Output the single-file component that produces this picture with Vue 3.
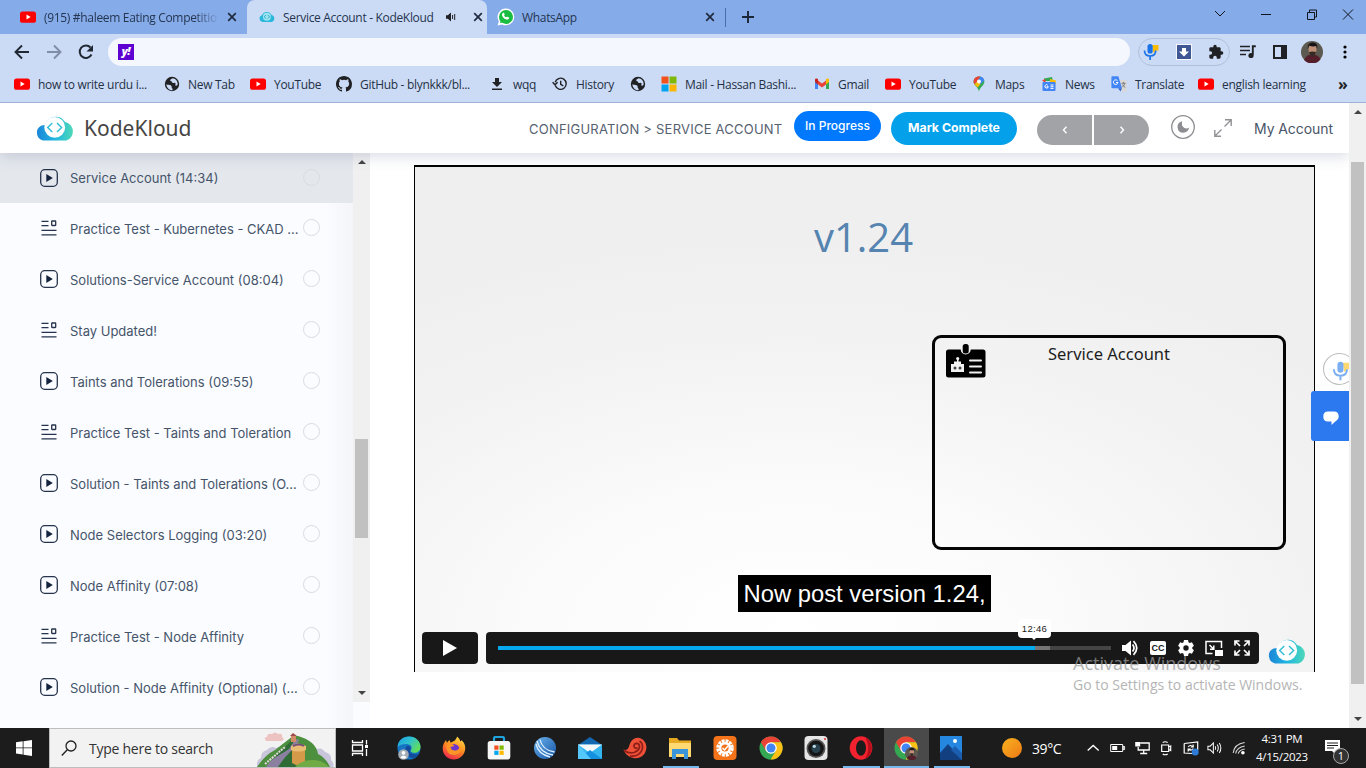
<script setup>
const bookmarks = [
  { icon: 'yt', label: 'how to write urdu i...' },
  { icon: 'globe', label: 'New Tab' },
  { icon: 'yt', label: 'YouTube' },
  { icon: 'github', label: 'GitHub - blynkkk/bl...' },
  { icon: 'download', label: 'wqq' },
  { icon: 'history', label: 'History' },
  { icon: 'globe', label: '' },
  { icon: 'microsoft', label: 'Mail - Hassan Bashi...' },
  { icon: 'gmail', label: 'Gmail' },
  { icon: 'yt', label: 'YouTube' },
  { icon: 'maps', label: 'Maps' },
  { icon: 'news', label: 'News' },
  { icon: 'translate', label: 'Translate' },
  { icon: 'yt', label: 'english learning' },
]

const lessons = [
  { icon: 'lesson-video', title: 'Service Account (14:34)', active: true },
  { icon: 'lesson-text', title: 'Practice Test - Kubernetes - CKAD ...' },
  { icon: 'lesson-video', title: 'Solutions-Service Account (08:04)' },
  { icon: 'lesson-text', title: 'Stay Updated!' },
  { icon: 'lesson-video', title: 'Taints and Tolerations (09:55)' },
  { icon: 'lesson-text', title: 'Practice Test - Taints and Toleration' },
  { icon: 'lesson-video', title: 'Solution - Taints and Tolerations (O...' },
  { icon: 'lesson-video', title: 'Node Selectors Logging (03:20)' },
  { icon: 'lesson-video', title: 'Node Affinity (07:08)' },
  { icon: 'lesson-text', title: 'Practice Test - Node Affinity' },
  { icon: 'lesson-video', title: 'Solution - Node Affinity (Optional) (...' },
]

const apps = [
  { icon: 'edge' },
  { icon: 'firefox' },
  { icon: 'store' },
  { icon: 'swirl' },
  { icon: 'mail' },
  { icon: 'nautilus' },
  { icon: 'explorer', open: true },
  { icon: 'sunbox' },
  { icon: 'chrome' },
  { icon: 'camera' },
  { icon: 'opera', open: true },
  { icon: 'chrome-user', open: true, active: true },
  { icon: 'photos', open: true },
]

const trayIcons = ['tray-up', 'tray-battery', 'tray-net', 'tray-cam', 'tray-sync', 'tray-sound', 'tray-wifi']
const played = 87.6
const loaded = 90
</script>

<template>
  <div class="screen">
    <svg class="sprite" width="0" height="0">
      <defs>
        <linearGradient id="gCloud" x1="0" y1="0" x2="1" y2="0">
          <stop offset="0" stop-color="#1c86d8" /><stop offset=".5" stop-color="#1fb5e0" /><stop offset="1" stop-color="#4fd8b8" />
        </linearGradient>
        <linearGradient id="gEdge" x1="0" y1="0" x2="1" y2=".6">
          <stop offset="0" stop-color="#1b9de2" /><stop offset=".5" stop-color="#2fc0cf" /><stop offset="1" stop-color="#62dd5b" />
        </linearGradient>
        <linearGradient id="gFox" x1=".8" y1="0" x2=".3" y2="1">
          <stop offset="0" stop-color="#ffe04a" /><stop offset=".5" stop-color="#ff8a1e" /><stop offset="1" stop-color="#f0264f" />
        </linearGradient>
        <linearGradient id="gSun" x1="0" y1="0" x2="1" y2="1">
          <stop offset="0" stop-color="#f8b21f" /><stop offset="1" stop-color="#ef7a16" />
        </linearGradient>
        <linearGradient id="gSwirl" x1="0" y1="0" x2="1" y2="1">
          <stop offset="0" stop-color="#6cb4ee" /><stop offset="1" stop-color="#1453a4" />
        </linearGradient>
      </defs>

      <symbol id="yt" viewBox="0 0 16 16">
        <rect x="0" y="2.4" width="16" height="11.4" rx="2.6" fill="#f00" />
        <path d="M6.5 5.6v5l4.2-2.5z" fill="#fff" />
      </symbol>
      <symbol id="globe" viewBox="0 0 16 16">
        <circle cx="8" cy="8" r="7.2" fill="#202124" />
        <path d="M2.4 8.2c1.5.9 2.9.4 4.3 1.1 1.7.8.4 2.3 1.4 3 .8.6.6 1.5.3 1.9-3.2.1-6-2.6-6-6zM8.5 2.3c-.9.8-2.5 1-2.3 2.2.2 1 1.6.5 1.8 1.6.2 1 1.4 1.2 2.3.8 1.1-.4 1.6.8 1.1 1.7-.4.8.4 1.7 1.3 1 .6-.5.9-1.1 1-1.7-.1-3-2.4-5.3-5.2-5.6z" fill="#ccdbf5" />
      </symbol>
      <symbol id="github" viewBox="0 0 16 16">
        <path fill="#202124" d="M8 0C3.58 0 0 3.58 0 8c0 3.54 2.29 6.53 5.47 7.59.4.07.55-.17.55-.38 0-.19-.01-.82-.01-1.49-2.01.37-2.53-.49-2.69-.94-.09-.23-.48-.94-.82-1.13-.28-.15-.68-.52-.01-.53.63-.01 1.08.58 1.23.82.72 1.21 1.87.87 2.33.66.07-.52.28-.87.51-1.07-1.78-.2-3.64-.89-3.64-3.95 0-.87.31-1.59.82-2.15-.08-.2-.36-1.02.08-2.12 0 0 .67-.21 2.2.82a7.6 7.6 0 0 1 4 0c1.53-1.04 2.2-.82 2.2-.82.44 1.1.16 1.92.08 2.12.51.56.82 1.27.82 2.15 0 3.07-1.87 3.75-3.65 3.95.29.25.54.73.54 1.48 0 1.07-.01 1.93-.01 2.2 0 .21.15.46.55.38A8.01 8.01 0 0 0 16 8c0-4.42-3.58-8-8-8z" />
      </symbol>
      <symbol id="download" viewBox="0 0 16 16">
        <path d="M6 2h4v4h3l-5 5-5-5h3zM3 12.4h10V14H3z" fill="#202124" />
      </symbol>
      <symbol id="history" viewBox="0 0 16 16">
        <path d="M3.3 9.6A5.6 5.6 0 1 0 3.2 6.3M.6 6.2l2.4 2.6 2.6-2.6M8.7 4.7v3.7l2.6 1.5" fill="none" stroke="#202124" stroke-width="1.4" />
      </symbol>
      <symbol id="microsoft" viewBox="0 0 16 16">
        <path d="M.5.5h7v7h-7z" fill="#f1511b" /><path d="M8.5.5h7v7h-7z" fill="#80b80a" />
        <path d="M.5 8.5h7v7h-7z" fill="#00a3ee" /><path d="M8.5 8.5h7v7h-7z" fill="#fbb507" />
      </symbol>
      <symbol id="gmail" viewBox="0 0 16 16">
        <path d="M1 4v9h3V6z" fill="#4285f4" /><path d="M12 6v7h3V4z" fill="#34a853" />
        <path d="M4 8.4V4.6l4 3 4-3v3.8l-4 3z" fill="#ea4335" />
        <path d="M1 4c0-1.6 1.8-1.9 3-.9v5.3L1 6z" fill="#c5221f" /><path d="M15 4c0-1.6-1.8-1.9-3-.9v5.3L15 6z" fill="#fbbc04" />
      </symbol>
      <symbol id="maps" viewBox="0 0 16 16">
        <path d="M8 .4c3 0 5.4 2.300 5.400 5.200C13.400 9.700 9 10.800 8 15.600 7 10.800 2.600 9.700 2.600 5.600 2.600 2.700 5 .4 8 .4z" fill="#34a853" />
        <path d="M2.700 6.500C2 3 4.500.4 8 .4l1.500.2L4 8.600z" fill="#ea4335" /><path d="M9.500.6c2 .500 3.400 1.900 3.800 3.800L7 10.500 4.500 8z" fill="#4285f4" />
        <path d="M3.500 8.600 6.500 5l3 3-2.800 3.500z" fill="#fbbc04" /><circle cx="8" cy="5.600" r="2" fill="#fff" />
      </symbol>
      <symbol id="news" viewBox="0 0 16 16">
        <path d="M3 2.500 11 1l1 4H3z" fill="#34a853" /><path d="M1 4.500 4 3l1 4z" fill="#ea4335" /><path d="m9 3 6 1.500-.6 4H9z" fill="#fbbc04" />
        <rect x="1.500" y="6" width="13" height="9" rx="1" fill="#4285f4" />
        <path d="M6.800 9.200a1.700 1.700 0 1 0 .5 1.500H5.500M9.500 9h3M9.500 10.700h3M9.500 12.400h3" fill="none" stroke="#fff" stroke-width="1" />
      </symbol>
      <symbol id="translate" viewBox="0 0 16 16">
        <path d="M7 4h7.500q1.100 0 1.100 1.200V15q0 .8-1 .8H10z" fill="#d8d8d8" />
        <path d="M.4 1.200Q.4.200 1.400.200h6L11 12.300H1.400q-1 0-1-1z" fill="#4285f4" /><path d="m7 12.300h4L9.500 15.500z" fill="#3367d6" />
        <path d="M6.500 4.700A2.300 2.300 0 1 0 7 6.500H5" fill="none" stroke="#fff" stroke-width="1" /><path d="M10.500 7.300h4M12.500 6v1.300M13.800 7.300q-.7 2.500-2.600 4M11.500 8.500q1 2 2.800 3" fill="none" stroke="#777" stroke-width=".9" />
      </symbol>
      <symbol id="cloud" viewBox="0 0 40 26">
        <path d="M8 25.500A8 8 0 0 1 6.500 10.500Q8 10 10 10.300A11 11 0 0 1 30 7 9.600 9.600 0 0 1 31.500 25.500z" fill="url(#gCloud)" />
        <circle cx="19.700" cy="12.400" r="10.400" fill="#fff" />
        <path d="m17.300 8-4.600 4.500 4.600 4.500M22 8l4.600 4.500L22 17" fill="none" stroke="#35bfd4" stroke-width="1.500" />
      </symbol>
      <symbol id="minicloud" viewBox="0 0 16 12">
        <path d="M3.500 11A3.500 3.500 0 0 1 3 4.200 5.200 5.200 0 0 1 12.600 4 3.600 3.600 0 0 1 12.500 11z" fill="#29b7dc" />
        <circle cx="7.900" cy="5.800" r="4" fill="#9be4ef" /><path d="M7 4 5.200 5.800 7 7.600M8.800 4l1.800 1.800-1.800 1.800" fill="none" stroke="#2badcf" />
      </symbol>
      <symbol id="close" viewBox="0 0 10 10"><path d="m1.200 1.200 7.600 7.600m0-7.600L1.200 8.800" stroke="#202b3e" stroke-width="1.700" /></symbol>
      <symbol id="sound" viewBox="0 0 12 12"><path d="M1 4.300h1.800L6 1.500v9L2.800 7.700H1z" fill="#202124" /><path d="M7.600 4v4M9.700 3v6" stroke="#202124" stroke-width="1" /></symbol>
      <symbol id="whatsapp" viewBox="0 0 18 18">
        <path d="M9 .5a8.400 8.400 0 1 1-4 15.900L.6 17.500l1.200-4.300A8.400 8.400 0 0 1 9 .5z" fill="#fff" /><circle cx="9" cy="8.900" r="7" fill="#19bd42" /><path d="m3 15 .800-3.500 3 2.800z" fill="#19bd42" />
        <path d="M6.200 4.800c1-.5 1.500 1.500 1.400 2-.6.800-.4 1 .2 1.700.8.900 1.300 1 2 .3.800-.4 2.400.7 2.300 1.100-.3 1.500-1.900 2-3.500 1.300C6.500 10.300 5 8.500 4.900 6.700q.2-1.400 1.300-1.900z" fill="#fff" />
      </symbol>
      <symbol id="mic" viewBox="0 0 18 18">
        <path d="M10 2h6.500v5.500H14L11.500 10z" fill="#fbbc04" /><rect x="5.500" y="1" width="5.200" height="9.500" rx="2.600" fill="#1a73e8" />
        <path d="M2.500 7.500q0 5.500 5.600 5.500t5.600-5.500M8.100 13v4" fill="none" stroke="#1a73e8" stroke-width="1.700" />
      </symbol>
      <symbol id="puzzle" viewBox="0 0 24 24">
        <path fill="#202124" d="M20.500 11H19V7c0-1.100-.9-2-2-2h-4V3.500a2.500 2.500 0 0 0-5 0V5H4c-1.100 0-2 .9-2 2v3.800h1.500a2.700 2.700 0 0 1 0 5.400H2V20c0 1.100.9 2 2 2h3.800v-1.500a2.700 2.700 0 0 1 5.400 0V22H17c1.100 0 2-.9 2-2v-4h1.500a2.500 2.500 0 0 0 0-5z" />
      </symbol>

      <symbol id="lesson-video" viewBox="0 0 18 18">
        <rect x=".7" y=".7" width="16.600" height="16.600" rx="4" fill="none" stroke="#25334c" stroke-width="1.300" /><path d="M6.300 5v8l6.500-4z" fill="#14233e" />
      </symbol>
      <symbol id="lesson-text" viewBox="0 0 18 18">
        <path d="M1.500 2.300h7M1.500 6.700h7M1.500 11.300h15M1.500 15.900h15" stroke="#25334c" stroke-width="1.300" /><rect x="11.700" y="2" width="4" height="4.500" rx=".5" fill="none" stroke="#25334c" stroke-width="1.300" />
      </symbol>

      <symbol id="edge" viewBox="0 0 24 24">
        <circle cx="12" cy="12" r="11.500" fill="#1674c2" />
        <path d="M.6 11C1 4.500 6 .5 12 .5c7 0 11.500 5 11.500 10.200 0 4-3 6-6.300 6-3 0-4-1.500-3.200-2.700 2-3.200-.5-6-4.500-6-4 0-7.500 1.200-8.900 3z" fill="url(#gEdge)" />
        <path d="M10 10c-4 4-1 11 5 12 4 0 7-2.500 7.500-5-3 2-8 1.500-9.500-1-.8-1.500 1-2 .7-4-.4-1.700-2-2.500-3.700-2z" fill="#124b9b" />
        <circle cx="6.500" cy="18.500" r="5.300" fill="#a5adb5" /><circle cx="6.500" cy="16.800" r="1.900" fill="#fff" /><path d="M3.300 21.500q3.200-4 6.400 0-3.200 2.600-6.400 0z" fill="#fff" />
      </symbol>
      <symbol id="firefox" viewBox="0 0 24 24">
        <path d="M15 .5c2 1.500 2.800 3 3.300 5l1.400-1.200C22.500 7 23.500 10 23.200 13c-.6 6-5.500 10.500-11.300 10.500S.6 19 .7 12.500c0-3 1.300-6 3.300-8.500l.8 2.800L7.500 4l1 2.500C11 6 14.500 4 15 .5z" fill="url(#gFox)" />
        <circle cx="11.800" cy="13.500" r="5.600" fill="#6d36cf" /><path d="M4.500 9q5-3 8 1l-4 1q1 4 5 3.500c3 0 5-3 3.500-6.500 4 5 1 11-5 11S4 14 4.500 9z" fill="#ff9526" />
      </symbol>
      <symbol id="store" viewBox="0 0 24 24">
        <path d="M7 7V2.500q0-1.500 1.500-1.500h7Q17 1 17 2.500V7" fill="none" stroke="#1fa4dd" stroke-width="2.200" /><rect x=".7" y="5" width="22.600" height="18.500" rx="2.500" fill="#f7f7f7" />
        <path d="M7.300 9.500h4.200v4.200H7.300z" fill="#f25022" /><path d="M12.500 9.500h4.200v4.200h-4.200z" fill="#7fba00" /><path d="M7.300 14.700h4.200v4.200H7.300z" fill="#00a4ef" /><path d="M12.500 14.700h4.200v4.200h-4.200z" fill="#ffb900" />
      </symbol>
      <symbol id="swirl" viewBox="0 0 24 24">
        <circle cx="12" cy="12" r="11" fill="url(#gSwirl)" /><path d="M4 5q3 12 16 14M7 3.500Q9 14 21.500 16M3 8q2 10 14 13" fill="none" stroke="#dcefff" stroke-width="1.300" />
      </symbol>
      <symbol id="mail" viewBox="0 0 24 24">
        <path d="M0 9 12 1l12 8z" fill="#1267b0" /><path d="M0 8.500h24V23H0z" fill="#35b5f0" /><path d="M0 8.500h24L12 17z" fill="#f3f7fa" /><path d="M0 23 12 14l12 9z" fill="#1490df" /><path d="M0 8.500 13 23H0z" fill="#54c8fa" />
      </symbol>
      <symbol id="nautilus" viewBox="0 0 24 24">
        <path d="M.5 13.500q4 1.500 5.500-3C8 3.500 12 1 16.500 2c5 1.500 8 6.500 6.500 12-1.500 6.500-7.500 9-12.500 8C5.500 21 2 18 .5 13.500z" fill="#ef5038" />
        <path d="M1 14.500q5 3.500 10 2 6-2 5.500-6.500c-1-4-6-3-5.500.500.500 2 2.500 2.300 3.500 1M7 20q9 1 12-6 2-6-2.500-9" fill="none" stroke="#8d1e17" stroke-width="1.700" />
      </symbol>
      <symbol id="explorer" viewBox="0 0 24 24">
        <path d="M1 2h8l2 2.500h12V20H1z" fill="#e8a922" /><path d="M1 7h22v14H1z" fill="#ffda73" /><path d="M4 13h16v10h-4v-5H8v5H4z" fill="#3a96da" />
      </symbol>
      <symbol id="sunbox" viewBox="0 0 24 24">
        <rect x=".5" y="0" width="23" height="24" rx="4" fill="#f57319" /><circle cx="12" cy="12" r="7" fill="none" stroke="#fff" stroke-width="3.500" stroke-dasharray="2.800 .9" /><circle cx="12" cy="12" r="6" fill="#fff" /><circle cx="12" cy="12" r="3.600" fill="#f57319" /><path d="m9.500 12 2 2 3.500-4" stroke="#fff" stroke-width="1.500" fill="none" />
      </symbol>
      <symbol id="chrome" viewBox="0 0 24 24">
        <circle cx="12" cy="12" r="11.500" fill="#34a853" /><path d="M2 6.200A11.500 11.500 0 0 1 22 6.200H12L7 15z" fill="#ea4335" /><path d="M22 6.200A11.500 11.500 0 0 1 11.500 23.500L17 14.800 12 6.200z" fill="#fbc116" />
        <circle cx="12" cy="12" r="5.800" fill="#fff" /><circle cx="12" cy="12" r="4.500" fill="#4285f4" />
      </symbol>
      <symbol id="camera" viewBox="0 0 24 24">
        <rect x=".5" y="0" width="23" height="24" rx="4" fill="#e6e6e6" /><circle cx="12" cy="12.500" r="9.500" fill="#555" /><circle cx="12" cy="12.500" r="7.800" fill="#151515" /><circle cx="12" cy="12.500" r="4.500" fill="#27414d" /><circle cx="10.300" cy="10.300" r="1.600" fill="#bfd9e6" /><circle cx="21" cy="3" r="1" fill="#e03030" />
      </symbol>
      <symbol id="opera" viewBox="0 0 24 24">
        <path fill-rule="evenodd" d="M12 .3a11.300 11.700 0 1 1 0 23.400A11.300 11.700 0 0 1 12 .3zm0 4a5 7.700 0 1 0 0 15.400 5 7.700 0 0 0 0-15.400z" fill="#f3222f" /><path d="M15 1c10 3 11 18 0 22 5-3 6-18 0-22z" fill="#b50f1b" />
      </symbol>
      <symbol id="face" viewBox="0 0 22 22">
        <circle cx="11" cy="11" r="11" fill="#5c5a50" /><path d="M3 19q3-6 8-5 6-1 8.500 4.500A11 11 0 0 1 3 19z" fill="#541f2b" />
        <path d="M7.500 8q.5-5 4-5t4 5q-.3 7-4 7t-4-7z" fill="#c08f78" /><path d="M6.700 8q-.5-6.500 5-6.500T16.200 8l-1-3q-4 1-7-.5z" fill="#171417" /><path d="M8 11q3.500-1 7 0-1 4.500-3.500 4.500T8 11z" fill="#352825" />
      </symbol>
      <symbol id="chrome-user" viewBox="0 0 24 24">
        <use href="#chrome" width="24" height="24" /><use href="#face" x="11" y="11" width="13" height="13" />
      </symbol>
      <symbol id="photos" viewBox="0 0 24 24">
        <path d="M1 0h22v24H1z" fill="#2587df" /><path d="M1 24V17L9 8l14 16z" fill="#123f7f" /><path d="m12 14 4-4 7 7v7z" fill="#1b5eb0" /><circle cx="16" cy="5" r="2" fill="#fff" />
      </symbol>

      <symbol id="tray-up" viewBox="0 0 16 16"><path d="m2.500 10.500 5.500-5 5.500 5" fill="none" stroke="#fff" stroke-width="1.400" /></symbol>
      <symbol id="tray-battery" viewBox="0 0 16 16"><path d="M1.500 4.500h12v7h-12zM14 6.500h1.500v3H14z" fill="none" stroke="#fff" /><path d="M3 6h5v4H3z" fill="#fff" /></symbol>
      <symbol id="tray-net" viewBox="0 0 16 16"><path d="M6 3h9v7H4V7M9.500 10v3.500M6 13.500h7" fill="none" stroke="#fff" stroke-width="1.300" /><path d="M1 2h5v4.500H1z" fill="#fff" /></symbol>
      <symbol id="tray-cam" viewBox="0 0 16 16"><path d="M3.500 5h7v6.500h-7zM10.500 7l2-1v4.500l-2-1M4.500 2.500q2.500-1.500 5 0M4.500 14q2.500 1.500 5 0" fill="none" stroke="#fff" stroke-width="1.200" /></symbol>
      <symbol id="tray-sync" viewBox="0 0 16 16"><path d="M1 3.500 14.500 2v8M1 3.500V13l8 .5M5 7q2-3 5 0M10 4.500V7H7.500M10 8.500q-2 3-5 .5M5 11.500V9h2.500" fill="none" stroke="#fff" stroke-width="1.200" /><circle cx="12" cy="12" r="3.500" fill="#2e7cd6" /></symbol>
      <symbol id="tray-sound" viewBox="0 0 18 16"><path d="M1 6h2.500L7 2.500v11L3.500 10H1z" fill="none" stroke="#fff" stroke-width="1.100" /><path d="M9 6q1.200 2 0 4M11.200 4.200q2.400 3.800 0 7.600M13.500 2.500q3.400 5.500 0 11" fill="none" stroke="#fff" stroke-width="1.100" /></symbol>
      <symbol id="tray-wifi" viewBox="0 0 16 16"><path d="M2 13Q3 4 13.500 2.500M4.500 13.500Q5.500 7.500 13.500 6M7 13.700Q8 10 13.500 9" fill="none" stroke="#d6d6d6" stroke-width="1.100" /><circle cx="11.700" cy="12.700" r="1.800" fill="#fff" /></symbol>
    </svg>

    <div class="tabs">
      <div class="tab t1"><svg class="i16"><use href="#yt" /></svg><span class="title fade">(915) #haleem Eating Competitio</span><svg class="x"><use href="#close" /></svg></div>
      <div class="tab t2"><svg class="i16 mc"><use href="#minicloud" /></svg><span class="title kk">Service Account - KodeKloud</span><svg class="snd"><use href="#sound" /></svg><svg class="x"><use href="#close" /></svg></div>
      <div class="tab t3"><svg class="wa"><use href="#whatsapp" /></svg><span class="title wt">WhatsApp</span><svg class="x"><use href="#close" /></svg></div>
      <svg class="plus" viewBox="0 0 14 14"><path d="M7 1v12M1 7h12" stroke="#1c2637" stroke-width="1.900" /></svg>
      <svg class="winctl" viewBox="0 0 160 28">
        <path d="m20 11 5 5 5-5M66 14.500h10M112.500 12.500h7v7h-7zM114.500 12v-2h7v7h-2M158 9.500l-10 10" fill="none" stroke="#10151f" /><path d="m148 9.500 10 10" stroke="#10151f" />
      </svg>
    </div>

    <div class="toolbar">
      <svg class="nav" viewBox="0 0 108 36">
        <path d="M29 18H16m6-6.500L15.500 18l6.500 6.500" fill="none" stroke="#202833" stroke-width="1.900" />
        <path d="M47 18h13m-6-6.500 6.500 6.500-6.500 6.500" fill="none" stroke="#7f8da8" stroke-width="1.900" />
        <path d="M91.500 20.500A6.200 6.200 0 1 1 90.500 13.500" fill="none" stroke="#202833" stroke-width="2" /><path d="M93 11v6.500h-6.500z" fill="#202833" />
      </svg>
      <div class="omnibox"><span class="yahoo">y!</span></div>
      <div class="exts">
        <svg class="e-mic"><use href="#mic" /></svg>
        <svg class="e-down" viewBox="0 0 16 16"><path d="M0 0h16v16H0z" fill="#f7f8fb" /><path d="M1 1h14v14H1z" fill="#3f5795" /><path d="M6 4h4v3.500h3l-5 5-5-5h3z" fill="#fff" /></svg>
        <svg class="i16"><use href="#puzzle" /></svg>
      </div>
      <svg class="queue" viewBox="0 0 18 16"><path d="M1 2.500h10M1 6.500h10M1 10.500h6" stroke="#202124" stroke-width="1.700" /><path d="M16.800 2.300h-3v8.500" stroke="#202124" stroke-width="1.900" fill="none" /><circle cx="12" cy="11.500" r="2.600" fill="#202124" /></svg>
      <svg class="panel" viewBox="0 0 14 14"><path d="M1 1h12v12H1z" fill="none" stroke="#202124" stroke-width="2" /><path d="M8 1h5v12H8z" fill="#202124" /></svg>
      <svg class="avatar"><use href="#face" /></svg>
      <svg class="dots" viewBox="0 0 4 14"><circle cx="2" cy="2" r="1.600" /><circle cx="2" cy="7" r="1.600" /><circle cx="2" cy="12" r="1.600" /></svg>
    </div>

    <div class="bookmarks">
      <div v-for="(b, i) in bookmarks" :key="i" class="bm"><svg class="i16"><use :href="'#' + b.icon" /></svg><span>{{ b.label }}</span></div>
      <b class="more">»</b>
    </div>

    <div class="page">
      <div class="site">
        <header class="head">
          <svg class="logo"><use href="#cloud" /></svg>
          <span class="brand">KodeKloud</span>
          <span class="crumb">CONFIGURATION &gt; SERVICE ACCOUNT</span>
          <span class="progress">In Progress</span>
          <span class="complete">Mark Complete</span>
          <div class="pager">
            <span><svg viewBox="0 0 6 8"><path d="M4.500.7 1.500 4l3 3.300" /></svg></span>
            <span><svg viewBox="0 0 6 8"><path d="m1.500.7 3 3.300-3 3.300" /></svg></span>
          </div>
          <svg class="moon" viewBox="0 0 24 24"><circle cx="12" cy="12" r="11.300" fill="none" stroke="#8e8e92" stroke-width="1.300" /><path d="M11.300 6.300q-5 1-4.800 6 .6 5.500 6 5.500 4.500-.2 5.800-5.200-2 1.700-4.800.5-3.800-2.300-2.200-6.800z" fill="#8e8e92" /></svg>
          <svg class="expand" viewBox="0 0 18 18"><path d="M.8 11v6.200H7M11 .8h6.200V7M1 17l6.500-6.500M10.500 7.500 17 1" fill="none" stroke="#929296" stroke-width="1.400" /></svg>
          <span class="account">My Account</span>
        </header>

        <div class="body">
          <aside class="side">
            <div class="list">
              <div v-for="l in lessons" :key="l.title" class="row" :class="{ on: l.active }">
                <svg class="ric"><use :href="'#' + l.icon" /></svg><span class="rt">{{ l.title }}</span><i class="ring"></i>
              </div>
            </div>
            <div class="sbar inner"><i class="up"></i><i class="thumb"></i><i class="down"></i></div>
          </aside>

          <main class="main">
            <div class="video">
              <div class="version">v1.24</div>
              <div class="card">
                <svg class="badge" viewBox="0 0 40 34">
                  <rect x="0" y="5.500" width="39.500" height="28" rx="2.500" /><circle cx="19.700" cy="5.500" r="5" fill="#f2f2f2" /><rect x="16.700" y="0" width="6" height="9.500" rx="2.500" />
                  <path d="M5 20h13v8H5zM8 17.500h7V20H8zM11 14h1.500v4H11z" fill="#f2f2f2" /><circle cx="11.700" cy="14.500" r="1.600" fill="#f2f2f2" /><circle cx="9" cy="24" r="1.500" fill="#444" /><circle cx="14" cy="24" r="1.500" fill="#444" />
                  <path d="M24 16.500h11M24 22.500h11M24 28.500h11" stroke="#f2f2f2" stroke-width="2" stroke-linecap="round" />
                </svg>
                <span>Service Account</span>
              </div>
              <div class="caption">Now post version 1.24,</div>
              <div class="controls">
                <div class="play"><svg viewBox="0 0 14 16"><path d="M0 0v16l14-8z" fill="#fff" /></svg></div>
                <div class="strip">
                  <div class="track"><i class="loaded" :style="{ width: loaded + '%' }"></i><i class="played" :style="{ width: played + '%' }"></i></div>
                  <svg class="vic" viewBox="0 0 18 16"><path d="M0 5h3.500L9 .5v15L3.500 11H0z" fill="#fff" /><path d="M10.500 4.500q3 3.500 0 7M11.500 1.200q6.500 6.800 0 13.600" fill="none" stroke="#fff" stroke-width="1.700" /></svg>
                  <span class="cc">CC</span>
                  <svg class="gear" viewBox="0 0 16 16"><path fill-rule="evenodd" fill="#fff" d="M6 0h4l.5 2.200 1.200.7 2.200-.7 2 3.500L14.300 7.300v1.400l1.600 1.600-2 3.500-2.200-.7-1.200.7L10 16H6l-.5-2.200-1.200-.7-2.200.7-2-3.500 1.600-1.600V7.300L.1 5.700l2-3.500 2.200.7 1.200-.7zM8 5.300a2.700 2.700 0 1 0 0 5.400 2.700 2.700 0 0 0 0-5.400z" /></svg>
                  <svg class="pip" viewBox="0 0 18 16"><path d="M7.500 13.500H1v-12h15.500V8M4.500 5l4 4M8.800 5.500v3.700H5" fill="none" stroke="#fff" stroke-width="1.500" /><path d="M10 10h8v6h-8z" fill="#fff" /></svg>
                  <svg class="full" viewBox="0 0 16 16"><path d="M1 5.500V1h4.500M10.500 1H15v4.500M15 10.500V15h-4.500M5.500 15H1v-4.500M1 1l5 5M15 1l-5 5M15 15l-5-5M1 15l5-5" fill="none" stroke="#fff" stroke-width="1.700" /></svg>
                </div>
                <svg class="vlogo"><use href="#cloud" /></svg>
              </div>
              <div class="tip">12:46</div>
            </div>
          </main>
          <div class="voice"><svg><use href="#mic" /></svg></div>
          <div class="chat"><svg viewBox="0 0 16 15"><path d="M5 .5h6q4.700 0 4.700 5 0 3-3.700 5.200L8.500 14v-3.500H5Q.3 10.500.3 5.500T5 .5z" fill="#fff" /></svg></div>
        </div>
      </div>
      <div class="sbar outer"><i class="up"></i><i class="thumb"></i><i class="down"></i></div>
      <div class="watermark"><p class="w1">Activate Windows</p><p class="w2">Go to Settings to activate Windows.</p></div>
    </div>

    <footer class="taskbar">
      <div class="start"><svg viewBox="0 0 16 16"><path d="M0 2.300 6.700 1.300v6.200H0zM7.500 1.200 16 0v7.500H7.500zM0 8.300h6.700v6.200L0 13.500zM7.500 8.300H16V16l-8.500-1.200z" fill="#fff" /></svg></div>
      <div class="search">
        <svg class="mag" viewBox="0 0 16 16"><circle cx="10" cy="6" r="5" fill="none" stroke="#222" stroke-width="1.300" /><path d="M6.300 9.700.8 15.400" stroke="#222" stroke-width="1.400" /></svg>
        <span>Type here to search</span>
        <svg class="wall" viewBox="0 0 78 38">
          <path d="M9 12q-3-4 1-4 0-4 5-3 3-3 6 0 5-1 4 3 4 3-1 4z" fill="#edc3c2" />
          <path d="M0 38q-1-7 4-9 0-7 6-8 4-5 9-2 5-3 9 3v16zM50 38V22q5-6 10-2 5-2 8 3 7 2 6 8 4 4 2 7z" fill="#c9c5da" />
          <path d="M0 38q8-12 18-17l18-14h5q18 5 20 18 8 4 12 13z" fill="#4c8f3f" /><path d="m13 33 17-17 6-6 3 28H17z" fill="#2f6c35" />
          <path d="M9 38c6-10 15-12 23-18l6-9 4-1q-1 7-8 12-8 8-13 16z" fill="#8b809f" /><path d="m8 35 20-17" stroke="#e3d6df" stroke-width="2" stroke-dasharray="2 1" />
          <path d="M35 20h13v15q-7 3-13-1z" fill="#d39b49" /><path d="M34 17q7-5 15 0v4q-8 3-15 0z" fill="#e9bd73" /><path d="M36 17q6-3 11 0" stroke="#725077" stroke-width="2" fill="none" /><path d="M34 7h5v6h-5z" fill="#d18c67" /><path d="m33 7 3-3 4 3z" fill="#9c4c4b" />
          <path d="M38 38q8-8 20-7 9 1 14 7z" fill="#70ab45" />
        </svg>
      </div>
      <div class="tview"><svg viewBox="0 0 18 16"><path d="M1.500 0v2.500h10V0M1.500 16v-2.500h10V16M1.500 5h10v6h-10zM15.500 0v4.500M15.500 9v7" fill="none" stroke="#fff" stroke-width="1.300" /><path d="M14 5h3v3h-3z" fill="#fff" /></svg></div>
      <div v-for="a in apps" :key="a.icon" class="app" :class="{ open: a.open, active: a.active }"><svg><use :href="'#' + a.icon" /></svg></div>
      <div class="weather"><svg viewBox="0 0 20 20"><circle cx="10" cy="10" r="10" fill="url(#gSun)" /></svg><span>39°C</span></div>
      <div class="tray"><svg v-for="t in trayIcons" :key="t"><use :href="'#' + t" /></svg></div>
      <div class="clock"><span>4:31 PM</span><span>4/15/2023</span></div>
      <div class="notif"><svg viewBox="0 0 28 26"><path d="M2 3h15v11h-4v4l-4-4H2z" fill="#fff" /><path d="M4 6h11M4 8.500h11M4 11h7" stroke="#1c1c1c" /></svg><i>1</i></div>
    </footer>
  </div>
</template>

<style>
html, body { margin: 0; overflow: hidden; }
</style>

<style scoped>
* { box-sizing: border-box; }
svg { display: block; flex: none; }
.sprite { position: absolute; }
.screen { width: 1366px; height: 768px; display: flex; flex-direction: column; overflow: hidden; font-family: "Open Sans", "Noto Sans", sans-serif; background: #fff; white-space: nowrap; }
.i16 { width: 16px; height: 16px; }

.tabs { height: 34px; background: #86abe9; display: flex; align-items: center; flex: none; font-size: 12px; color: #243550; }
.tab { height: 34px; display: flex; align-items: center; }
.t1 { width: 247px; padding-left: 20px; border-radius: 0 0 8px 0; background: #86abe9; }
.t2 { width: 240px; padding-left: 12px; background: #ccdbf5; border-radius: 8px 8px 0 0; }
.t3 { width: 239px; padding-left: 10px; position: relative; }
.t3::after { content: ""; position: absolute; right: 0; top: 8px; height: 19px; width: 1px; background: #4b6ea8; }
.title { margin-left: 8px; letter-spacing: -0.32px; overflow: hidden; }
.fade { width: 175px; -webkit-mask-image: linear-gradient(90deg, #000 86%, transparent); mask-image: linear-gradient(90deg, #000 86%, transparent); }
.kk { width: 154px; }
.wt { width: 176px; margin-left: 7px; }
.mc { height: 12px; }
.x { width: 10px; height: 10px; }
.t1 .x { margin-left: 8px; }
.snd { width: 12px; height: 12px; margin-left: 8px; }
.t2 .x { margin-left: 16px; }
.wa { width: 18px; height: 18px; }
.t3 .x { margin-left: 7px; }
.plus { width: 14px; height: 14px; margin-left: 15px; }
.winctl { width: 160px; height: 28px; margin-left: 440px; align-self: flex-start; }

.toolbar { height: 36px; background: #ccdbf5; display: flex; align-items: center; flex: none; }
.nav { width: 108px; height: 36px; }
.omnibox { width: 1022px; height: 28px; border-radius: 14px; background: #f4f7fd; padding: 6px 10px; }
.yahoo { display: block; width: 16px; height: 16px; background: #5f01d1; color: #fff; font: italic 800 11px/14px "Open Sans", sans-serif; text-align: center; letter-spacing: -0.5px; }
.exts { width: 92px; height: 28px; margin-left: 8px; border: 1px solid #afbfdc; border-radius: 14px; display: flex; align-items: center; padding-left: 3px; }
.e-mic { width: 18px; height: 18px; }
.e-down { width: 16px; height: 16px; margin: 0 16px 0 16px; }
.queue { width: 18px; height: 16px; margin-left: 9px; }
.panel { width: 14px; height: 14px; margin-left: 16px; }
.avatar { width: 22px; height: 22px; margin-left: 14px; }
.dots { width: 4px; height: 14px; margin-left: 20px; }

.bookmarks { height: 33px; background: #ccdbf5; border-bottom: 1px solid #9eb3d8; padding: 0 0 4px 14px; display: grid; grid-template-columns: 150px 86px 86px 153px 63px 78px 31px 153px 71px 86px 70px 70px 87px 140px 30px; align-items: center; flex: none; font-size: 12px; letter-spacing: -0.3px; color: #243146; }
.bm { display: flex; align-items: center; gap: 8px; }
.more { font-size: 16px; color: #202124; line-height: 16px; }

.page { height: 625px; display: flex; position: relative; flex: none; background: #fff; }
.site { width: 1349px; height: 625px; display: flex; flex-direction: column; position: relative; overflow: hidden; }
.head { height: 50px; background: #fff; display: flex; align-items: center; flex: none; position: relative; z-index: 3; box-shadow: 0 3px 14px rgba(60, 70, 120, .2); font-family: Inter, sans-serif; }
.logo { width: 40px; height: 26px; margin-left: 35px; }
.brand { width: 445px; margin-left: 9px; font: 400 21px/26px "Noto Sans", sans-serif; color: #454545; }
.crumb { width: 265px; font-size: 13px; color: #56616f; letter-spacing: .22px; padding-top: 2px; }
.progress { width: 87px; height: 30px; margin-top: -4px; border-radius: 15px; background: #0079ff; color: #fff; font-size: 12px; font-weight: 500; line-height: 30px; text-align: center; }
.complete { width: 126px; height: 33px; margin-left: 10px; border-radius: 17px; background: #04a1ea; color: #fff; font-size: 12.300px; font-weight: 700; line-height: 32px; text-align: center; }
.pager { display: flex; gap: 2px; margin: 3px 0 0 20px; border-radius: 15px; overflow: hidden; }
.pager span { width: 55px; height: 30px; background: #a2a3a7; display: flex; align-items: center; justify-content: center; }
.pager svg { width: 6px; height: 8px; fill: none; stroke: #fff; stroke-width: 1.400; }
.moon { width: 24px; height: 24px; margin: -2px 0 0 22px; }
.expand { width: 18px; height: 18px; margin-left: 19px; }
.account { margin-left: 22px; font-size: 14px; color: #4a5568; letter-spacing: -.08px; }

.body { display: flex; height: 575px; position: relative; }
.side { width: 370px; display: flex; background: #fafcff; }
.list { width: 353px; height: 575px; overflow: hidden; background: linear-gradient(90deg, #fafcff 325px, #f3f5f9); }
.row { height: 51px; margin-top: 0; display: flex; align-items: center; padding-left: 40px; }
.row:first-child { height: 50px; }
.row.on { background: #e4e8ed; }
.ric { width: 18px; height: 18px; margin-top: -1px; }
.rt { width: 233px; margin-left: 12px; font: 400 13px/18px Inter, sans-serif; color: #46546a; }
.ring { width: 17px; height: 17px; border: 1.500px solid #d9dbdf; border-radius: 50%; margin-top: -2px; }
.sbar { width: 17px; background: #f0f0f0; display: flex; flex-direction: column; align-items: center; }
.inner { height: 549px; }
.thumb { width: 13px; background: #c1c1c1; }
.up, .down { width: 0; height: 0; border: 4px solid transparent; }
.up { border-bottom-color: #444; border-top: 0; }
.down { border-top-color: #444; border-bottom: 0; }
.inner .up { margin-top: 7px; }
.inner .thumb { height: 99px; margin-top: 275px; }
.inner .down { margin-top: 153px; }
.outer { height: 625px; }
.outer .up { margin-top: 7px; }
.outer .thumb { height: 522px; margin-top: 48px; }
.outer .down { margin-top: 33px; }

.main { padding: 12px 0 0 44px; }
.video { width: 901px; height: 507px; position: relative; border: 1px solid #000; border-top-width: 2px; border-bottom: 0; background: radial-gradient(ellipse 80% 80% at 42% 92%, #fff 0, #fbfbfb 35%, #f3f3f3 70%, #efefef 100%); }
.version { position: absolute; left: 399px; top: 43px; font-size: 40px; line-height: 54px; color: #5584b0; }
.card { position: absolute; left: 517px; top: 168px; width: 354px; height: 215px; border: 3.500px solid #050505; border-radius: 9px; font: 16.500px/22px "Noto Sans", sans-serif; color: #1d1d1d; text-align: center; padding-top: 5px; }
.badge { position: absolute; left: 11px; top: 6px; width: 40px; height: 34px; }
.caption { position: absolute; left: 323px; top: 408px; width: 253px; height: 37px; background: #000; color: #fff; font: 23.800px/37px "Liberation Sans", Arial, sans-serif; text-align: center; }
.controls { position: absolute; left: 7px; top: 465px; display: flex; }
.play { width: 56px; height: 32px; border-radius: 4px; background: #181818; display: flex; align-items: center; justify-content: center; }
.play svg { width: 14px; height: 16px; }
.strip { width: 773px; height: 32px; margin-left: 8px; border-radius: 4px; background: #181818; padding-left: 12px; display: flex; align-items: center; }
.track { width: 613px; height: 4px; background: #444; position: relative; }
.track i { position: absolute; left: 0; top: 0; height: 4px; }
.loaded { background: #757575; }
.played { background: #04a9ee; }
.vic { width: 18px; height: 16px; margin-left: 11px; }
.cc { width: 16px; height: 14px; margin-left: 10px; background: #fff; border-radius: 2px; color: #181818; font: 700 9px/14px "Liberation Sans", sans-serif; text-align: center; }
.gear { width: 16px; height: 16px; margin-left: 12px; }
.pip { width: 18px; height: 16px; margin-left: 11px; }
.full { width: 16px; height: 16px; margin-left: 11px; }
.vlogo { width: 40px; height: 26px; margin: 6px 0 0 8px; }
.tip { position: absolute; left: 603px; top: 452px; width: 33px; height: 19px; border-radius: 4px; background: #fff; color: #222; font: 9.500px/19px "Liberation Sans", sans-serif; text-align: center; letter-spacing: .3px; }
.tip::after { content: ""; position: absolute; left: 13px; top: 18px; border: 3.500px solid transparent; border-top-color: #fff; border-bottom: 0; }
.voice { position: absolute; left: 1323px; top: 200px; width: 33px; height: 32px; border: 1px solid #bbb; border-radius: 50%; background: #fff; padding: 6px 7px; }
.voice svg { width: 21px; height: 22px; opacity: .57; }
.chat { position: absolute; left: 1311px; top: 238px; width: 38px; height: 50px; background: #2b78ef; border-radius: 3px 0 0 3px; display: flex; align-items: center; padding: 5px 0 0 12px; }
.chat svg { width: 16px; height: 15px; }
.watermark { position: absolute; left: 1073px; top: 549px; z-index: 5; color: #b5b5b5; }
.watermark p { margin: 0; }
.w1 { font-size: 18px; line-height: 22px; color: rgba(155, 155, 155, .75); }
.w2 { font-size: 14px; line-height: 21px; }

.taskbar { height: 40px; background: #1c1c1c; display: flex; flex: none; color: #fff; }
.start { width: 49px; display: flex; align-items: center; padding-left: 16px; }
.start svg { width: 16px; height: 16px; }
.search { width: 287px; height: 40px; background: #f2f2f2; border: 1px solid #bdbdbd; display: flex; align-items: center; font-size: 14px; color: #333; letter-spacing: -.25px; }
.mag { width: 16px; height: 16px; margin-left: 11px; }
.search span { width: 168px; margin-left: 12px; }
.wall { width: 78px; height: 38px; }
.tview { width: 50.500px; display: flex; align-items: center; padding-left: 15px; }
.tview svg { width: 18px; height: 16px; }
.app { width: 45.200px; display: flex; align-items: center; justify-content: center; position: relative; }
.app svg { width: 24px; height: 24px; }
.app.open::after { content: ""; position: absolute; bottom: 0; left: 5px; right: 4px; height: 2px; background: #76b9ed; }
.app.active { background: #4a4a4a; }
.app.active::after { left: 0; right: 0; }
.weather { width: 107px; display: flex; align-items: center; padding-left: 28px; gap: 10px; font-size: 14px; letter-spacing: -.4px; }
.weather svg { width: 20px; height: 20px; }
.tray { width: 169px; display: flex; align-items: center; gap: 8px; padding-left: 4px; }
.tray svg { width: 16.400px; height: 16px; }
.clock { width: 66px; margin-left: -1px; display: flex; flex-direction: column; align-items: center; font-size: 11.500px; line-height: 18px; padding-top: 2px; letter-spacing: -.3px; }
.notif { position: relative; padding: 9px 0 0 8px; }
.notif svg { width: 28px; height: 26px; }
.notif i { position: absolute; left: 18px; top: 20px; width: 16px; height: 16px; border: 1px solid #aaa; border-radius: 50%; background: #333; font: 11px/14px "Open Sans", sans-serif; text-align: center; }
</style>
